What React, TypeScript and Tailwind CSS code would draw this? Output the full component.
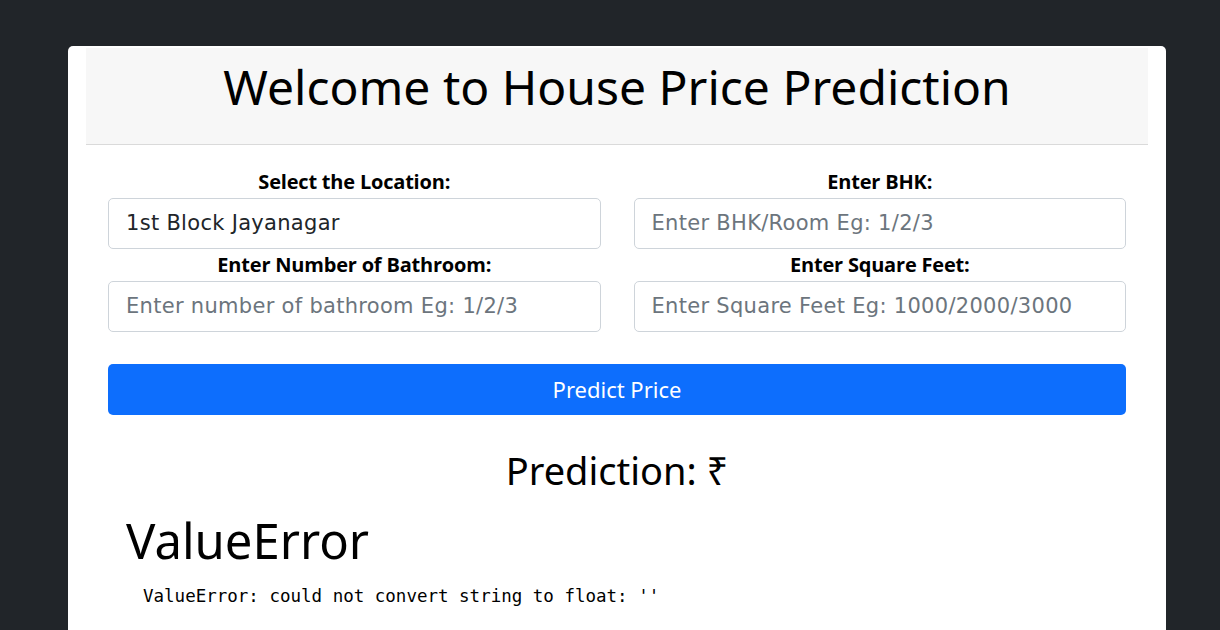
import { useState } from 'react';

const fields = [
  { label: 'Select the Location:', placeholder: '', value: '1st Block Jayanagar' },
  { label: 'Enter BHK:', placeholder: 'Enter BHK/Room Eg: 1/2/3', value: '' },
  { label: 'Enter Number of Bathroom:', placeholder: 'Enter number of bathroom Eg: 1/2/3', value: '' },
  { label: 'Enter Square Feet:', placeholder: 'Enter Square Feet Eg: 1000/2000/3000', value: '' },
];

export default function App() {
  const [values, setValues] = useState(fields.map((f) => f.value));

  return (
    <div className="min-h-screen bg-[#212529] pt-[46px] font-['Noto_Sans',sans-serif]">
      <div className="ml-[68px] w-[1098px] rounded-[5px] bg-white px-[18px] pt-[2px] pb-[40px]">
        <div className="flex h-[97px] items-center justify-center border-b border-[#dadada] bg-[#f7f7f7] pb-[18px]">
          <h1 className="text-[48px] leading-none text-black">Welcome to House Price Prediction</h1>
        </div>

        <div className="px-[22px] pt-[24px]">
          <div className="grid grid-cols-2 gap-x-[33px] gap-y-[3px]">
            {fields.map((f, i) => (
              <div key={f.label} className="flex flex-col">
                <label className="mb-[3px] h-[26px] text-center text-[20px] font-bold leading-[26px] tracking-[-0.2px] text-black font-['Open_Sans',sans-serif]">
                  {f.label}
                </label>
                <input
                  type="text"
                  value={values[i]}
                  placeholder={f.placeholder}
                  onChange={(e) => {
                    const next = [...values];
                    next[i] = e.target.value;
                    setValues(next);
                  }}
                  className="h-[51px] w-full rounded-[5px] border border-[#ced4da] px-[17px] pb-[2px] text-[21px] tracking-[0.3px] text-[#212529] placeholder:text-[#6c757d] outline-none font-['DejaVu_Sans',sans-serif]"
                />
              </div>
            ))}
          </div>

          <button className="mt-[32px] h-[51px] w-full rounded-[5px] bg-[#0d6efd] text-[22px] text-white">
            Predict Price
          </button>

          <h2 className="mt-[31px] text-center text-[38px] leading-[48px] text-black">Prediction: ₹</h2>

          <div className="pl-[18px]">
            <h1 className="mt-[17px] text-[49px] leading-[58px] text-black">ValueError</h1>
            <pre className="mt-[15px] pl-[17px] text-[17.5px] leading-[25px] text-black font-['DejaVu_Sans_Mono',monospace]">
              ValueError: could not convert string to float: ''
            </pre>
          </div>
        </div>
      </div>
    </div>
  );
}
